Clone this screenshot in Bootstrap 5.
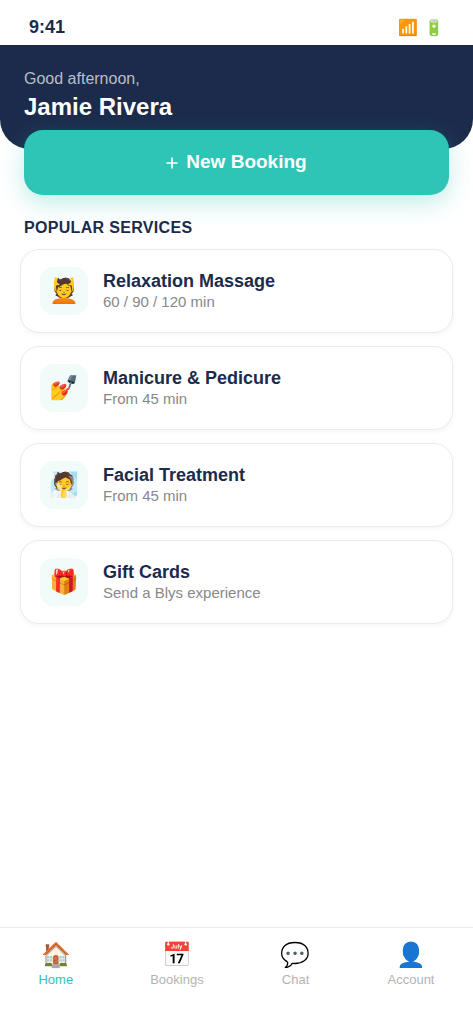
<!DOCTYPE html>
<html lang="en">
<head>
<meta charset="utf-8">
<meta name="viewport" content="width=device-width, initial-scale=1">
<title>Home</title>
<link href="https://cdn.jsdelivr.net/npm/bootstrap@5.3.0/dist/css/bootstrap.min.css" rel="stylesheet">
<style>
  :root { --navy: #1c2b4b; --teal: #2ec4b6; }
  body { font-family: "Liberation Sans", Arial, "Noto Color Emoji", sans-serif; color: var(--navy); background: #fff; }
  .status-bar { height: 45px; padding: 10px 29px 0; font-size: 18px; }
  .status-icons { font-size: 16px; gap: 6px; }
  .hero { background: var(--navy); height: 104px; padding: 24px 24px 0; border-radius: 0 0 30px 30px; }
  .greeting { font-size: 16px; line-height: 20px; color: rgba(255,255,255,.7); }
  .user-name { font-size: 24px; line-height: 28px; margin-top: 4px; }
  .cta-wrap { margin-top: -19px; padding: 0 24px; }
  .btn-cta, .btn-cta:hover { height: 65px; background: var(--teal); color: #fff; font-size: 19px; border: 0; border-radius: 19px; box-shadow: 0 8px 24px rgba(46,196,182,.3); }
  .section-title { font-size: 16px; line-height: 20px; letter-spacing: .02em; margin: 23px 24px 11px; }
  .services { gap: 13px; padding: 0 20px; }
  .service { height: 84px; padding: 0 19px; gap: 15px; border: 1px solid #ebebeb; border-radius: 19px; box-shadow: 0 2px 5px rgba(0,0,0,.04); color: var(--navy); background: #fff; }
  .tile { width: 48px; height: 48px; border-radius: 14px; background: #f0fbfa; font-size: 24px; }
  .service-name { font-size: 18px; line-height: 22px; }
  .service-note { font-size: 15px; line-height: 20px; color: #888; }
  .tab-bar { height: 97px; padding-top: 10px; border-top: 1px solid #ebebeb; }
  .tab { font-size: 13px; line-height: 16px; color: #b4b4b4; }
  .tab.active { color: var(--teal); }
  .tab-icon { font-size: 24px; line-height: 34px; }
</style>
</head>
<body>
<div class="d-flex flex-column min-vh-100">
  <div class="status-bar d-flex justify-content-between align-items-center fw-bold">
    <span>9:41</span>
    <span class="status-icons d-flex fw-normal"><span>📶</span><span>🔋</span></span>
  </div>
  <header class="hero">
    <div class="greeting">Good afternoon,</div>
    <h1 class="user-name fw-bold text-white mb-0">Jamie Rivera</h1>
  </header>
  <main class="flex-grow-1">
    <div class="cta-wrap">
      <button type="button" class="btn btn-cta w-100 fw-bold d-flex justify-content-center align-items-center gap-2">
        <svg width="12" height="12" viewBox="0 0 12 12" fill="none" stroke="#fff" stroke-width="1.7" aria-hidden="true"><path d="M6 .5v11M.5 6h11"/></svg>
        <span>New Booking</span>
      </button>
    </div>
    <h2 class="section-title fw-bold">POPULAR SERVICES</h2>
    <div class="services d-flex flex-column">
      <a href="#massage" class="service d-flex align-items-center text-decoration-none">
        <span class="tile d-flex align-items-center justify-content-center">💆</span>
        <span><span class="service-name d-block fw-bold">Relaxation Massage</span><span class="service-note d-block">60 / 90 / 120 min</span></span>
      </a>
      <a href="#nails" class="service d-flex align-items-center text-decoration-none">
        <span class="tile d-flex align-items-center justify-content-center">💅</span>
        <span><span class="service-name d-block fw-bold">Manicure &amp; Pedicure</span><span class="service-note d-block">From 45 min</span></span>
      </a>
      <a href="#facial" class="service d-flex align-items-center text-decoration-none">
        <span class="tile d-flex align-items-center justify-content-center">🧖</span>
        <span><span class="service-name d-block fw-bold">Facial Treatment</span><span class="service-note d-block">From 45 min</span></span>
      </a>
      <a href="#gifts" class="service d-flex align-items-center text-decoration-none">
        <span class="tile d-flex align-items-center justify-content-center">🎁</span>
        <span><span class="service-name d-block fw-bold">Gift Cards</span><span class="service-note d-block">Send a Blys experience</span></span>
      </a>
    </div>
  </main>
  <nav class="tab-bar d-flex justify-content-around align-items-start" aria-label="Main">
    <a href="#home" class="tab active text-decoration-none text-center" aria-current="page"><span class="tab-icon d-block">🏠</span>Home</a>
    <a href="#bookings" class="tab text-decoration-none text-center"><span class="tab-icon d-block">📅</span>Bookings</a>
    <a href="#chat" class="tab text-decoration-none text-center"><span class="tab-icon d-block">💬</span>Chat</a>
    <a href="#account" class="tab text-decoration-none text-center"><span class="tab-icon d-block">👤</span>Account</a>
  </nav>
</div>
<script src="https://cdn.jsdelivr.net/npm/bootstrap@5.3.0/dist/js/bootstrap.bundle.min.js"></script>
</body>
</html>
